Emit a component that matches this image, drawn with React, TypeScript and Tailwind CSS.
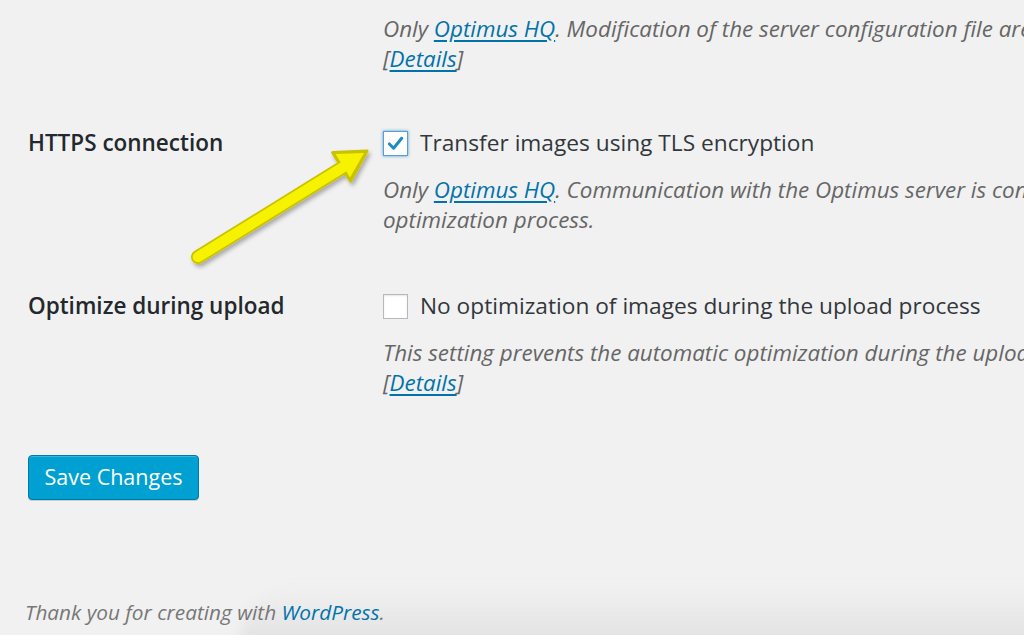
import React from 'react';

const Desc: React.FC<{ children: React.ReactNode }> = ({ children }) => (
  <p className="text-[22.4px] leading-[30px] italic text-[#666] whitespace-nowrap">{children}</p>
);

const Link: React.FC<{ children: React.ReactNode }> = ({ children }) => (
  <a href="#" className="text-[#0073aa] underline underline-offset-[3px]">
    {children}
  </a>
);

const Checkbox: React.FC<{ checked?: boolean }> = ({ checked }) => (
  <span
    className={
      checked
        ? 'flex items-center justify-center w-[25px] h-[25px] shrink-0 bg-white border border-[#5b9dd9] shadow-[0_0_3px_rgba(30,140,190,0.8)]'
        : 'flex items-center justify-center w-[25px] h-[25px] shrink-0 bg-white border border-[#b4b9be] shadow-[inset_0_1px_2px_rgba(0,0,0,0.1)]'
    }
  >
    {checked && (
      <svg width="19" height="19" viewBox="0 0 20 20">
        <path d="M3.5 10.5 L8 15 L16.5 4.5" fill="none" stroke="#1e8cbe" strokeWidth="3.2" strokeLinecap="round" strokeLinejoin="round" />
      </svg>
    )}
  </span>
);

const Row: React.FC<{ label: string; checked?: boolean; text: string; children: React.ReactNode }> = ({
  label,
  checked,
  text,
  children,
}) => (
  <div className="flex">
    <div className="w-[355px] shrink-0 h-[30px] flex items-center text-[22.5px] font-semibold text-[#23282d]">{label}</div>
    <div>
      <label className="flex items-center gap-[12px] h-[30px] text-[22.7px] text-[#32373c] whitespace-nowrap">
        <Checkbox checked={checked} />
        {text}
      </label>
      <div className="mt-[17px]">{children}</div>
    </div>
  </div>
);

const Arrow: React.FC = () => (
  <svg className="absolute inset-0 pointer-events-none" width="1024" height="635">
    <defs>
      <filter id="sh" x="-20%" y="-20%" width="140%" height="140%">
        <feDropShadow dx="2" dy="3" stdDeviation="2" floodColor="#000" floodOpacity="0.3" />
      </filter>
    </defs>
    <g filter="url(#sh)">
      <line x1="198" y1="257" x2="345" y2="166" stroke="#c9c200" strokeWidth="14" strokeLinecap="round" />
      <polygon points="367,151 350.6,181.3 332.6,152.5" fill="#c9c200" stroke="#c9c200" strokeWidth="3" strokeLinejoin="round" />
      <line x1="198" y1="257" x2="345" y2="166" stroke="#f7f200" strokeWidth="10.5" strokeLinecap="round" />
      <polygon points="364,153 350,177.5 335.5,154" fill="#f7f200" />
    </g>
  </svg>
);

export default function App() {
  return (
    <div className="relative w-[1024px] h-[635px] overflow-hidden bg-[#f1f1f1] font-['Open_Sans',sans-serif]">
      {/* soft shadow at the bottom right of the capture */}
      <div className="absolute -bottom-[10px] left-[240px] -right-[20px] h-[58px] bg-gradient-to-b from-[#f1f1f1]/0 to-[#e1e1e1] rounded-tl-[80px] blur-[6px]" />

      <div className="relative pl-[28px] pt-[14px]">
        <div className="pl-[355px]">
          <Desc>
            Only <Link>Optimus HQ</Link>. Modification of the server configuration file are required.
          </Desc>
          <Desc>
            [<Link>Details</Link>]
          </Desc>
        </div>

        <div className="mt-[54px]">
          <Row label="HTTPS connection" checked text="Transfer images using TLS encryption">
            <Desc>
              Only <Link>Optimus HQ</Link>. Communication with the Optimus server is conducted encrypted during the
            </Desc>
            <Desc>optimization process.</Desc>
          </Row>
        </div>

        <div className="mt-[56px]">
          <Row label="Optimize during upload" text="No optimization of images during the upload process">
            <Desc>This setting prevents the automatic optimization during the upload process.</Desc>
            <Desc>
              [<Link>Details</Link>]
            </Desc>
          </Row>
        </div>

        <button className="mt-[57px] w-[171px] h-[45px] rounded-[4px] bg-[#00a0d2] border border-[#0078a8] text-white text-[21.5px] shadow-[inset_0_1px_0_rgba(120,200,230,0.5),0_1px_0_rgba(0,0,0,0.15)]">
          Save Changes
        </button>

        <p className="mt-[97px] -ml-[3px] text-[20.8px] leading-[30px] italic text-[#777] whitespace-nowrap">
          Thank you for creating with <a href="#" className="text-[#0073aa]">WordPress</a>.
        </p>
      </div>

      <Arrow />
    </div>
  );
}
